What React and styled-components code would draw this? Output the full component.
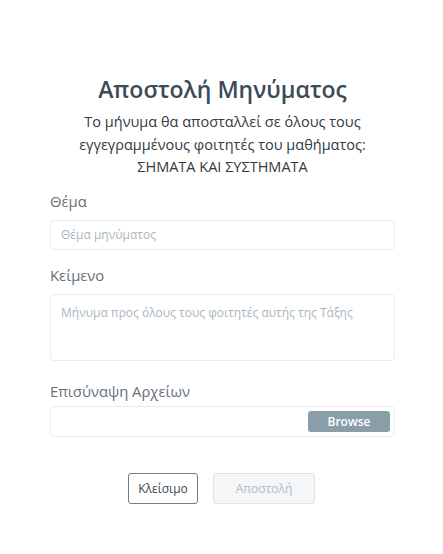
import styled, { createGlobalStyle } from "styled-components";

const GlobalStyle = createGlobalStyle`
  html, body {
    margin: 0;
    background: #fff;
  }
  body {
    font-family: "Open Sans", "Noto Sans", sans-serif;
  }
`;

export default function App() {
  return (
    <>
      <GlobalStyle />
      <Modal>
        <Title>Αποστολή Μηνύματος</Title>
        <Subtitle>
          Το μήνυμα θα αποσταλλεί σε όλους τους
          <br />
          εγγεγραμμένους φοιτητές του μαθήματος:
          <br />
          ΣΗΜΑΤΑ ΚΑΙ ΣΥΣΤΗΜΑΤΑ
        </Subtitle>

        <Field top={11} gap={8}>
          <Label>Θέμα</Label>
          <Input placeholder="Θέμα μηνύματος" />
        </Field>

        <Field top={14} gap={8}>
          <Label>Κείμενο</Label>
          <TextArea placeholder="Μήνυμα προς όλους τους φοιτητές αυτής της Τάξης" />
        </Field>

        <Field top={19} gap={4}>
          <Label>Επισύναψη Αρχείων</Label>
          <FileBox>
            <BrowseButton>Browse</BrowseButton>
          </FileBox>
        </Field>

        <Actions>
          <Button>Κλείσιμο</Button>
          <Button disabled wide>
            Αποστολή
          </Button>
        </Actions>
      </Modal>
    </>
  );
}

const Modal = styled.div`
  width: 443px;
  height: 554px;
  box-sizing: border-box;
  padding: 74px 48px 0 50px;
  display: flex;
  flex-direction: column;
`;
const Title = styled.h2`
  margin: 0;
  text-align: center;
  font-size: 23px;
  font-weight: 600;
  color: #3b4b57;
  line-height: 30px;
`;
const Subtitle = styled.p`
  margin: 7px 0 0;
  text-align: center;
  font-size: 14.5px;
  line-height: 22.5px;
  color: #333a40;
`;
const Field = styled.div`
  display: flex;
  flex-direction: column;
  margin-top: ${(p) => p.top}px;
  gap: ${(p) => p.gap}px;
`;
const Label = styled.label`
  font-size: 14.8px;
  color: #66707a;
  line-height: 22px;
`;
const Input = styled.input`
  box-sizing: border-box;
  height: 30px;
  border: 1px solid #e9ecef;
  border-radius: 4px;
  padding: 0 10px;
  font-family: inherit;
  font-size: 12px;
  outline: none;
  &::placeholder {
    color: #a9b6c0;
  }
`;
const TextArea = styled.textarea`
  box-sizing: border-box;
  height: 67px;
  border: 1px solid #e9ecef;
  border-radius: 4px;
  padding: 9px 10px;
  font-family: inherit;
  font-size: 12px;
  resize: none;
  outline: none;
  &::placeholder {
    color: #a9b6c0;
  }
`;
const FileBox = styled.div`
  box-sizing: border-box;
  height: 31px;
  border: 1px solid #e9ecef;
  border-radius: 4px;
  display: flex;
  justify-content: flex-end;
  align-items: center;
  padding: 0 4px;
`;
const BrowseButton = styled.button`
  width: 82px;
  height: 21px;
  border: none;
  border-radius: 3px;
  background: #8a9ea9;
  color: #fff;
  font-family: inherit;
  font-size: 12px;
  font-weight: 600;
  padding: 0;
`;
const Actions = styled.div`
  display: flex;
  justify-content: center;
  gap: 15px;
  margin-top: 36px;
  padding-right: 2px;
`;
const Button = styled.button`
  box-sizing: border-box;
  height: 31px;
  width: ${(p) => (p.wide ? "102px" : "70px")};
  border-radius: 3px;
  font-family: inherit;
  font-size: 12px;
  padding: 0;
  background: ${(p) => (p.disabled ? "#f4f6f8" : "#fff")};
  border: 1px solid ${(p) => (p.disabled ? "#dfe4e8" : "#6f7b86")};
  color: ${(p) => (p.disabled ? "#b2bdc6" : "#3a4650")};
`;
